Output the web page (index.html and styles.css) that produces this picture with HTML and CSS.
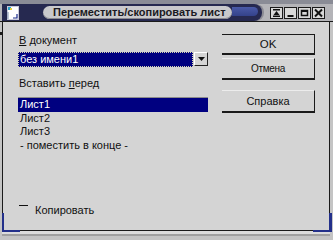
FILE: index.html
```html
<!DOCTYPE html>
<html>
<head>
<meta charset="utf-8">
<link rel="stylesheet" href="styles.css">
</head>
<body>
<div class="window">
  <div class="titlebar">
    <div class="tb-main">
      <svg class="tb-icon" width="12" height="14" viewBox="0 0 12 14">
        <rect x="0.5" y="0.5" width="11" height="13" fill="#ffffff" stroke="#c8c8d8"/>
        <rect x="1" y="1" width="3" height="3" fill="#2aa0c8"/>
        <rect x="3" y="2" width="2" height="2" fill="#e8d040"/>
        <path d="M10 8 V12 H6" stroke="#1a2a8a" stroke-width="1.2" fill="none"/>
        <path d="M1 6 V13" stroke="#8090b0" stroke-width="1" fill="none"/>
      </svg>
      <div class="tb-pill"><span>Переместить/скопировать лист</span></div>
      <div class="tb-tab"></div>
    </div>
    <div class="tb-buttons">
      <div class="tb-btn">
        <svg width="11" height="10" viewBox="0 0 11 10"><rect x="2" y="1" width="7" height="1.5" fill="#111"/><path d="M5.5 3 L8.5 7 H2.5 Z" fill="#111"/><rect x="2" y="7.5" width="7" height="1.5" fill="#111"/></svg>
      </div>
      <div class="tb-btn">
        <svg width="11" height="10" viewBox="0 0 11 10"><rect x="2.5" y="7" width="6" height="2" fill="#111"/></svg>
      </div>
      <div class="tb-btn">
        <svg width="11" height="10" viewBox="0 0 11 10"><rect x="2.5" y="2.5" width="6" height="5" fill="none" stroke="#111" stroke-width="1.5"/><rect x="2" y="2" width="7" height="2" fill="#111"/></svg>
      </div>
      <div class="tb-btn">
        <svg width="11" height="10" viewBox="0 0 11 10"><path d="M2 1.5 L9 8.5 M9 1.5 L2 8.5" stroke="#111" stroke-width="2"/></svg>
      </div>
    </div>
  </div>
  <div class="frame">
    <div class="content">
      <div class="left">
        <div class="label"><u>В</u> документ</div>
        <div class="combo">
          <div class="combo-text">без имени1</div>
          <div class="combo-btn">
            <svg width="7" height="4" viewBox="0 0 7 4"><path d="M0 0 H7 L3.5 4 Z" fill="#111"/></svg>
          </div>
        </div>
        <div class="label label2">Вставить <u>п</u>еред</div>
        <div class="list">
          <div class="row selected">Лист1</div>
          <div class="row">Лист2</div>
          <div class="row">Лист3</div>
          <div class="row">- поместить в конце -</div>
        </div>
        <div class="check">
          <span class="check-mark"></span>
          <span class="check-label">Копировать</span>
        </div>
      </div>
      <div class="right">
        <div class="btn btn-default">OK</div>
        <div class="btn btn-cancel">Отмена</div>
        <div class="btn btn-help">Справка</div>
      </div>
    </div>
    <div class="corner corner-tl"></div>
    <div class="corner corner-bl"></div>
    <div class="corner corner-br"></div>
  </div>
</div>
</body>
</html>
```

FILE: styles.css
```css
html, body {
  margin: 0;
  padding: 0;
  background: #c4c4c4;
}
body {
  font-family: "Liberation Sans", Arial, sans-serif;
  font-size: 11px;
  color: #111;
}
.window {
  width: 333px;
  height: 236px;
  background: #c4c4c4;
  overflow: hidden;
}
.titlebar {
  height: 21px;
  display: flex;
  align-items: flex-end;
  background: linear-gradient(#8a8c96 0, #8a8c96 4px, #b4b4b8 4px);
  border-bottom: 1px solid #1a1a1a;
}
.tb-main {
  margin-left: 2px;
  width: 260px;
  height: 17px;
  background: #262950;
  border-radius: 0 8px 8px 0;
  display: flex;
  align-items: center;
  box-shadow: 2px 0 0 #8c8c94;
}
.tb-icon {
  margin-left: 5px;
  display: block;
}
.tb-pill {
  margin-left: 24px;
  width: 189px;
  height: 13px;
  background: #c9c9cc;
  border-radius: 7px;
  overflow: hidden;
  white-space: nowrap;
  display: flex;
  align-items: center;
  box-shadow: inset 0 -1px 0 #8a8a90;
}
.tb-pill span {
  padding-left: 10px;
  font-weight: bold;
  font-size: 11px;
  letter-spacing: 0;
  color: #1a1a22;
  line-height: 13px;
}
.tb-tab {
  width: 26px;
  height: 9px;
  margin-bottom: 3px;
  background: linear-gradient(#4a5aa8, #34428a);
  border-radius: 0 5px 5px 0;
}
.tb-buttons {
  margin-left: auto;
  margin-right: 8px;
  align-self: center;
  display: flex;
  gap: 1px;
  margin-top: 4px;
}
.tb-btn {
  width: 11px;
  height: 10px;
  border: 1px solid #1a1a1a;
  background: #d8d8d8;
  display: flex;
  align-items: center;
  justify-content: center;
}
.tb-btn svg { display: block; }

.frame {
  position: relative;
  margin-left: 2px;
  width: 326px;
  height: 208px;
  background: #d4d4d4;
  border-left: 1px solid #1a1a1a;
  border-right: 1px solid #1a1a1a;
  border-bottom: 1px solid #1a1a1a;
  box-shadow: 0 3px 0 #dcdcdc, 0 5px 0 #a0a0a0;
}
.content {
  display: grid;
  grid-template-columns: 190px 93px;
  column-gap: 14px;
  padding: 12px 0 0 15px;
}
.left {
  display: flex;
  flex-direction: column;
}
.label {
  line-height: 13px;
  height: 13px;
  padding-left: 1px;
  white-space: nowrap;
}
.label u { text-decoration-thickness: 1px; text-underline-offset: 1px; }
.combo {
  margin-top: 5px;
  height: 15px;
  display: flex;
}
.combo-text {
  flex: 1;
  background: #000080;
  color: #fff;
  line-height: 13px;
  padding-left: 1px;
  outline: 1px dotted #d8d8b0;
  outline-offset: -1px;
  border: 1px solid #000080;
  box-sizing: border-box;
}
.combo-btn {
  width: 14px;
  height: 14px;
  box-sizing: border-box;
  margin-left: 1px;
  border-top: 1px solid #ffffff;
  border-left: 1px solid #ffffff;
  border-right: 1px solid #222;
  border-bottom: 1px solid #222;
  background: #d4d4d4;
  display: flex;
  align-items: center;
  justify-content: center;
}
.combo-btn svg { display: block; }
.label2 {
  margin-top: 10px;
}
.list {
  margin-top: 7px;
  border-top: 1px solid #8c8c8c;
}
.row {
  height: 13.5px;
  line-height: 13.5px;
  padding-left: 2px;
  white-space: nowrap;
}
.row.selected {
  background: #000080;
  color: #fff;
}
.check {
  margin-top: 52px;
  display: flex;
  align-items: flex-start;
  height: 14px;
}
.check-mark {
  width: 9px;
  height: 1px;
  background: #111;
  margin-top: 1px;
  margin-left: 1px;
}
.check-label {
  margin-left: 7px;
  line-height: 13px;
  margin-top: 0;
}
.right {
  display: flex;
  flex-direction: column;
}
.btn {
  box-sizing: border-box;
  display: flex;
  align-items: center;
  justify-content: center;
  border-right: 1px solid #1a1a1a;
  border-bottom: 2px solid #1a1a1a;
  border-top: 1px solid #ececec;
  white-space: nowrap;
}
.btn-default {
  height: 21px;
  border-top: 1px solid #1a1a1a;
  font-size: 11.5px;
}
.btn-cancel {
  margin-top: 3px;
  height: 22px;
  font-size: 10px;
  letter-spacing: -0.3px;
}
.btn-help {
  margin-top: 10px;
  height: 23px;
  font-size: 11px;
}
.corner {
  position: absolute;
  border-color: #23308a;
  border-style: solid;
  border-width: 0;
}
.corner-tl {
  left: -3px;
  top: 10px;
  width: 2px;
  height: 3px;
  background: #1a1a1a;
}
.corner-bl {
  left: -1px;
  bottom: -2px;
  width: 16px;
  height: 17px;
  border-left-width: 2px;
  border-bottom-width: 2px;
}
.corner-br {
  right: -3px;
  bottom: -2px;
  width: 16px;
  height: 17px;
  border-right-width: 3px;
  border-bottom-width: 2px;
}
```
